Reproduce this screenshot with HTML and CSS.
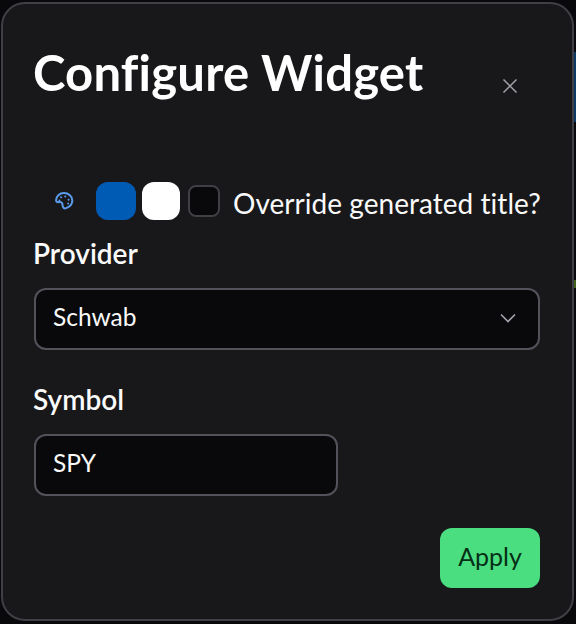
FILE: index.html
```html
<!DOCTYPE html>
<html lang="en">
<head>
  <meta charset="UTF-8">
  <meta name="viewport" content="width=device-width, initial-scale=1.0">
  <title>Configure Widget</title>
  <link rel="stylesheet" href="styles.css">
</head>
<body>
  <div class="modal">
    <div class="modal-header">
      <h1>Configure Widget</h1>
      <button class="close" aria-label="Close">
        <svg width="16" height="16" viewBox="0 0 16 16" fill="none" stroke="#a1a1aa" stroke-width="1.5">
          <path d="M1.500 1.500l13 13M14.500 1.500l-13 13"/>
        </svg>
      </button>
    </div>

    <div class="colors">
      <span class="palette">
        <svg width="20" height="20" viewBox="0 0 24 24" fill="none" stroke="#5a9bec" stroke-width="2.4" stroke-linecap="round" stroke-linejoin="round">
          <path d="M12 2.500C6.500 2.500 2.500 6.500 2.500 11c0 1.800 1.300 2.600 2.800 2.300 1.800-.4 3.600-.4 4.400 1 .8 1.500.2 3 1 4.700.7 1.500 2.300 2.300 3.900 1.600 4-1.700 7.400-5 7.400-9.300 0-5-4.500-8.800-10-8.800z"/>
          <path d="M13.500 6.500h.01M17.500 10.500h.01M8.500 7.500h.01M6.500 11.500h.01M17 15h.01"/>
        </svg>
      </span>
      <span class="swatch swatch-blue"></span>
      <span class="swatch swatch-white"></span>
      <span class="check"></span>
      <span class="check-label">Override generated title?</span>
    </div>

    <label class="field-label">Provider</label>
    <div class="select">
      <span>Schwab</span>
      <svg width="16" height="16" viewBox="0 0 16 16" fill="none" stroke="#a1a1aa" stroke-width="1.700">
        <path d="M1 4.500l7 7 7-7"/>
      </svg>
    </div>

    <label class="field-label symbol-label">Symbol</label>
    <div class="input">SPY</div>

    <div class="actions">
      <button class="apply">Apply</button>
    </div>
  </div>
</body>
</html>
```

FILE: styles.css
```css
* {
  box-sizing: border-box;
}

html, body {
  margin: 0;
  height: 100%;
}

body {
  background: #09090b linear-gradient(to bottom, #09090b 52px, #0b3a66 52px, #0b3a66 122px, #09090b 122px, #09090b 280px, #3f5f1c 280px, #3f5f1c 288px, #09090b 288px) right top / 2px 100% no-repeat;
  font-family: "Lato", sans-serif;
  color: #fafafa;
  padding: 2px 2px 3px 1px;
}

.modal {
  height: 619px;
  background: #18181b;
  border: 2px solid #3f3f46;
  border-radius: 24px;
  padding: 0 31px;
}

.modal-header {
  display: flex;
  padding-top: 39px;
  height: 178px;
}

h1 {
  margin: 0 0 0 -1px;
  font-size: 49px;
  line-height: 58px;
  font-weight: 700;
  letter-spacing: .2px;
  color: #fff;
}

.close {
  background: none;
  border: 0;
  padding: 0;
  height: 16px;
  margin: 35px 0 0 79px;
  display: flex;
}

.colors {
  display: flex;
  align-items: center;
  height: 38px;
}

.palette {
  display: flex;
  width: 62px;
  justify-content: flex-end;
  padding-right: 22px;
}

.swatch {
  width: 40px;
  height: 38px;
  border-radius: 12px;
  margin-right: 6px;
}

.swatch-blue {
  background: #005bb5;
}

.swatch-white {
  background: #fff;
  width: 38px;
}

.check {
  width: 32px;
  height: 32px;
  border: 2px solid #3f3f46;
  border-radius: 8px;
  background: #09090b;
  margin-right: 13px;
  margin-left: 2px;
}

.check-label {
  font-size: 28px;
  line-height: 38px;
  padding-top: 3px;
  letter-spacing: .04px;
  white-space: nowrap;
}

.field-label {
  display: block;
  font-size: 28px;
  font-weight: 600;
  line-height: 34px;
  margin: 16px 0 0 -1px;
}

.select, .input {
  display: flex;
  align-items: center;
  height: 62px;
  background: #09090b;
  border: 2px solid #52525b;
  border-radius: 12px;
  padding: 0 17px 5px;
  font-size: 24.5px;
}

.select svg {
  margin: 3px 5px 0 0;
}

.select {
  justify-content: space-between;
  width: 506px;
  margin-top: 18px;
}

.symbol-label {
  margin-top: 32px;
}

.input {
  width: 304px;
  margin-top: 18px;
}

.actions {
  display: flex;
  justify-content: flex-end;
  width: 506px;
  margin-top: 32px;
}

.apply {
  width: 100px;
  height: 60px;
  border: 0;
  border-radius: 12px;
  background: #4ade80;
  color: #052e16;
  font-family: inherit;
  font-size: 25px;
  padding: 0 0 4px;
}
```
